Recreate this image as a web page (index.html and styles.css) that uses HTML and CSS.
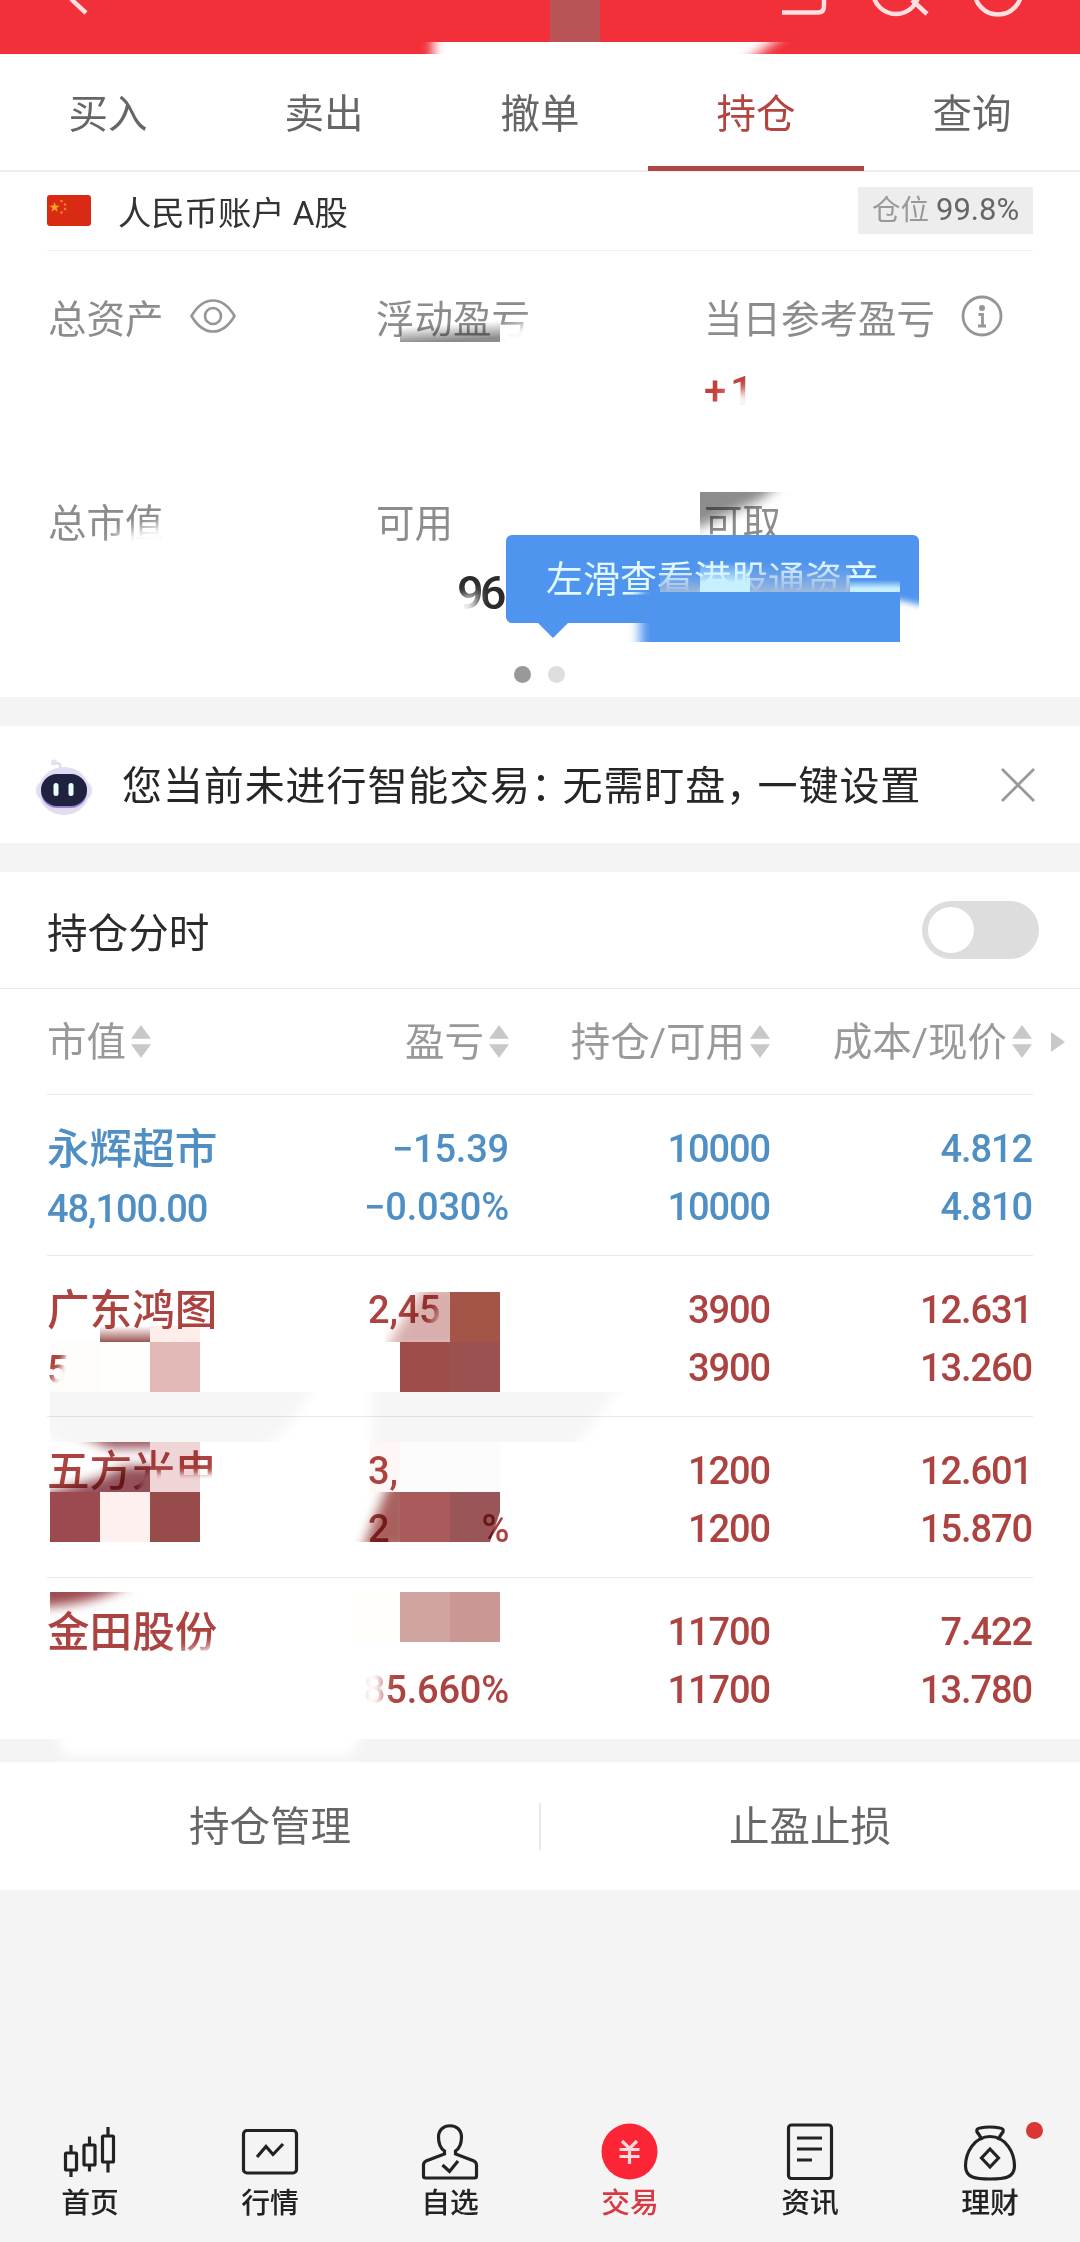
FILE: index.html
```html
<!DOCTYPE html>
<html lang="zh-CN">
<head>
  <meta charset="UTF-8" />
  <title>持仓</title>
  <meta name="viewport" content="width=device-width, initial-scale=1.0" />
  <link rel="stylesheet" href="styles.css">
</head>
<body>
  <div class="app">
    <header class="topbar">
      <svg width="1080" height="54" viewBox="0 0 1080 54" fill="none" stroke="#ffdfe0" stroke-width="4.5">
        <path d="M68 -8 L72 0 L86 13" />
        <path d="M782 12.500 H818 Q824 12.500 824 6 V-4" />
        <circle cx="896" cy="-9" r="23" />
        <path d="M912 0 L927 14" />
        <circle cx="998" cy="-9" r="23.500" />
      </svg>
    </header>

    <nav class="tabs">
      <a class="tab">买入</a>
      <a class="tab">卖出</a>
      <a class="tab">撤单</a>
      <a class="tab active">持仓</a>
      <a class="tab">查询</a>
    </nav>

    <section class="account">
      <svg class="flag" width="44" height="31" viewBox="0 0 44 31">
        <rect width="44" height="31" rx="3" fill="#d92b13" />
        <path d="M7.500 7 l1.300 3.600 3.800.1 -3 2.400 1.100 3.700 -3.200-2.200 -3.100 2.200 1.100-3.700 -3-2.400 3.800-.1z" fill="#f5a623" />
        <g fill="#ee8a20">
          <circle cx="14.500" cy="6" r="1.300" />
          <circle cx="18" cy="9.500" r="1.300" />
          <circle cx="18" cy="14" r="1.300" />
          <circle cx="14.500" cy="17.500" r="1.300" />
        </g>
      </svg>
      <span class="account-name">人民币账户 A股</span>
      <span class="ratio">仓位 <b>99.8%</b></span>
    </section>

    <section class="assets">
      <div class="asset">
        <div class="asset-label">总资产
          <svg width="46" height="34" viewBox="0 0 46 34" fill="none" stroke="#969696" stroke-width="2.600">
            <path d="M1.500 17 C8 6 15 1.500 23 1.500 S38 6 44.500 17 C38 28 31 32.500 23 32.500 S8 28 1.500 17z" />
            <circle cx="23" cy="17" r="8" />
          </svg>
        </div>
      </div>
      <div class="asset">
        <div class="asset-label">浮动盈亏</div>
      </div>
      <div class="asset">
        <div class="asset-label">当日参考盈亏
          <svg width="42" height="42" viewBox="0 0 42 42" fill="none" stroke="#969696" stroke-width="2.800">
            <circle cx="21" cy="21" r="19" />
            <circle cx="21" cy="13" r="3" fill="#969696" stroke="none" />
            <path d="M17.500 19.500 H21.500 V31 M17 31 H25" />
          </svg>
        </div>
        <div class="asset-value up">+1</div>
      </div>
      <div class="asset">
        <div class="asset-label">总市值</div>
      </div>
      <div class="asset">
        <div class="asset-label">可用</div>
        <div class="asset-value cash">96</div>
      </div>
      <div class="asset">
        <div class="asset-label">可取</div>
      </div>
      <div class="pager"><i class="dot on"></i><i class="dot"></i></div>
      <div class="tooltip">左滑查看港股通资产</div>
    </section>

    <section class="notice">
      <svg class="robot" width="56" height="58" viewBox="0 0 56 58">
        <path d="M24 12 Q26 4 19 5" fill="none" stroke="#dfdcec" stroke-width="2.500" />
        <circle cx="18" cy="4.500" r="3" fill="#e4e2ee" />
        <rect x="0" y="24" width="56" height="17" rx="7" fill="#e3e0f2" />
        <ellipse cx="28" cy="33" rx="25.500" ry="24" fill="#e2dcf3" />
        <rect x="5" y="17" width="46" height="33" rx="16" fill="#9a83cf" />
        <rect x="5" y="16" width="46" height="32" rx="16" fill="#1f2340" />
        <rect x="17.500" y="25" width="5" height="13" rx="2.500" fill="#e9ffff" />
        <rect x="32.500" y="25" width="5" height="13" rx="2.500" fill="#e9ffff" />
      </svg>
      <p>您当前未进行智能交易<span class="pt">：</span>无需盯盘<span class="pt">，</span>一键设置</p>
      <svg class="close" width="34" height="34" viewBox="0 0 34 34" stroke="#999" stroke-width="2.800">
        <path d="M1 1 L33 33 M33 1 L1 33" />
      </svg>
    </section>

    <section class="holdings">
      <div class="switch-row">
        <span>持仓分时</span>
        <span class="switch"></span>
      </div>

      <div class="row head">
        <div>市值<i class="sort"></i></div>
        <div>盈亏<i class="sort"></i></div>
        <div>持仓/可用<i class="sort"></i></div>
        <div>成本/现价<i class="sort"></i></div>
        <i class="more"></i>
      </div>

      <div class="row down">
        <div><b class="name">永辉超市</b><br>48,100.00</div>
        <div class="profit">−15.39<br>−0.030%</div>
        <div>10000<br>10000</div>
        <div>4.812<br>4.810</div>
      </div>
      <div class="row up">
        <div><b class="name">广东鸿图</b><br>5</div>
        <div class="profit cut">2,45<br>&nbsp;</div>
        <div>3900<br>3900</div>
        <div>12.631<br>13.260</div>
      </div>
      <div class="row up">
        <div><b class="name">五方光电</b></div>
        <div class="profit cut">3,<br>2<span class="pct">%</span></div>
        <div>1200<br>1200</div>
        <div>12.601<br>15.870</div>
      </div>
      <div class="row up">
        <div><b class="name">金田股份</b></div>
        <div class="profit">&nbsp;<br>85.660%</div>
        <div>11700<br>11700</div>
        <div>7.422<br>13.780</div>
      </div>
    </section>

    <section class="actions">
      <a>持仓管理</a>
      <a>止盈止损</a>
    </section>

    <nav class="bottom-nav">
      <a>
        <svg width="60" height="60" viewBox="0 0 60 60">
          <rect x="5.500" y="34" width="11" height="17" rx="1" /><path d="M11 26 V34 M11 51 V58" />
          <rect x="24" y="26" width="11" height="20" rx="1" /><path d="M29.500 17.500 V26 M29.500 46 V52.500" />
          <rect x="42.500" y="17" width="11" height="26" rx="1" /><path d="M48 8 V17 M48 43 V53.500" />
        </svg>
        首页
      </a>
      <a>
        <svg width="60" height="60" viewBox="0 0 60 60">
          <rect x="3.500" y="11.500" width="53" height="42.500" rx="3.500" />
          <path d="M17 38 L26 27.500 L33 35.500 L43 25" />
        </svg>
        行情
      </a>
      <a>
        <svg width="60" height="60" viewBox="0 0 60 60">
          <path d="M24.500 32 V35 L6 42 Q3.500 43.500 3.500 46 V57 Q3.500 59 5.500 59 H54.500 Q56.500 59 56.500 57 V46 Q56.500 43.500 54 42 L35.500 35 V32 Q41.500 28 41.500 18 C41.500 3 18.500 3 18.500 18 Q18.500 28 24.500 32z" />
          <path d="M22.500 46 L29.500 52.500 L38 42" />
        </svg>
        自选
      </a>
      <a class="current">
        <svg width="60" height="60" viewBox="0 0 60 60">
          <circle cx="29.500" cy="32.500" r="28" fill="#fb2536" stroke="none" />
          <path d="M22 22 L29.500 29.500 L37 22 M19.500 30.500 H39.500 M19.500 37.500 H39.500 M29.500 29 V45" stroke="#ffd9dc" />
        </svg>
        交易
      </a>
      <a>
        <svg width="60" height="60" viewBox="0 0 60 60">
          <rect x="8.500" y="6" width="43" height="53.500" rx="3" />
          <path d="M17 19 H42 M17 30 H42 M17 41 H32" />
        </svg>
        资讯
      </a>
      <a>
        <svg width="60" height="60" viewBox="0 0 60 60">
          <path d="M22 21 Q19 15 17 13 Q16 9.500 20 9 Q30 7 40 9 Q44 9.500 43 13 Q41 15 38 21" />
          <path d="M30 17.500 C14 17.500 5.500 34 5.500 47 C5.500 59 16 60 30 60 S54.500 59 54.500 47 C54.500 34 46 17.500 30 17.500z" />
          <path d="M30 30 L38.500 39 L30 48 L21.500 39z" />
        </svg>
        理财
        <i class="badge"></i>
      </a>
    </nav>

    <!-- privacy masking: fades that hide the digits -->
    <svg class="mask" width="1080" height="2242" viewBox="0 0 1080 2242">
      <defs>
        <filter id="soft" x="-30%" y="-30%" width="160%" height="160%"><feGaussianBlur stdDeviation="6" /></filter>
        <filter id="fine" x="-30%" y="-30%" width="160%" height="160%"><feGaussianBlur stdDeviation="3" /></filter>
        <clipPath id="bar"><rect x="400" y="42" width="400" height="14" /></clipPath>
        <clipPath id="strip"><rect x="0" y="1739" width="500" height="23" /></clipPath>
        <clipPath id="tip"><rect x="600" y="592" width="300" height="50" /></clipPath>
        <clipPath id="tipend"><rect x="900" y="580" width="40" height="70" /></clipPath>
        <linearGradient id="tipfade" x1="0" y1="0" x2="0" y2="1">
          <stop offset="0" stop-color="#c7f0ff" stop-opacity="0" />
          <stop offset="0.7" stop-color="#c7f0ff" />
        </linearGradient>
        <linearGradient id="tipgray" x1="0" y1="0" x2="0" y2="1">
          <stop offset="0" stop-color="#7faae6" stop-opacity="0" />
          <stop offset="1" stop-color="#9db9dc" />
        </linearGradient>
      </defs>
      <rect x="550" y="0" width="50" height="42" fill="#b85456" />
      <g clip-path="url(#bar)"><path d="M433 30 H790 L735 70 H433z" fill="#fff" filter="url(#soft)" /></g>
      <g fill="#fff" filter="url(#soft)">
        <path d="M500 330 L545 318 V360 H500z" />
        <path d="M108 548 L115 535 L170 522 V560z" />
        <path d="M722 404 V396 L755 388 V420z" />
        <path d="M450 602 L480 592 L470 627 H445z" />
        <path d="M60 1372 H100 V1400 H40z" />
        <path d="M443 1300 L475 1285 V1340 H425z" />
        <path d="M170 1655 L225 1644 V1670 H150z" />
        <path d="M360 1660 H383 V1720 H360z" />
        <path d="M405 1492 H450 V1542 H400z" />
      </g>
      <path d="M140 1473 H225 V1505 H140z" fill="#fff" filter="url(#fine)" />
      <path d="M66 1350 H230 V1390 H55z" fill="#fff" filter="url(#fine)" />
      <rect x="660" y="570" width="40" height="22" fill="url(#tipgray)" />
      <rect x="700" y="562" width="50" height="30" fill="url(#tipfade)" />
      <rect x="750" y="562" width="100" height="30" fill="url(#tipgray)" />
      <rect x="850" y="580" width="50" height="12" fill="url(#tipfade)" />
      <g clip-path="url(#tipend)"><path d="M870 594 L935 608 V670 H870z" fill="#fff" filter="url(#fine)" /></g>
      <g clip-path="url(#tip)"><path d="M640 580 H920 V660 H640z" fill="#4f94ee" filter="url(#soft)" /><rect x="650" y="592" width="250" height="50" fill="#4f94ee" /></g>
      <g clip-path="url(#strip)"><path d="M50 1720 H370 L350 1756 H65z" fill="#fff" filter="url(#soft)" /></g>
    </svg>

    <!-- privacy masking: mosaic blocks, text stays visible through them -->
    <svg class="mask mosaic" width="1080" height="2242" viewBox="0 0 1080 2242">
      <defs>
        <linearGradient id="g1" x1="0" y1="0" x2=".25" y2="1">
          <stop offset=".35" stop-color="#8c8c8c" stop-opacity="0" />
          <stop offset="1" stop-color="#8c8c8c" />
        </linearGradient>
        <linearGradient id="r1" x1="0" y1="0" x2="0" y2="1">
          <stop offset="0" stop-color="#9c5552" stop-opacity="0" />
          <stop offset="1" stop-color="#9c5552" />
        </linearGradient>
        <clipPath id="c1"><rect x="700" y="492" width="100" height="43" /></clipPath>
        <clipPath id="c2"><rect x="50" y="1392" width="600" height="50" /></clipPath>
        <clipPath id="c3"><rect x="50" y="1442" width="100" height="50" /></clipPath>
        <clipPath id="c4"><rect x="350" y="1492" width="150" height="50" /></clipPath>
        <clipPath id="c5"><rect x="50" y="1592" width="100" height="50" /></clipPath>
        <clipPath id="c6"><rect x="385" y="1292" width="65" height="50" /></clipPath>
      </defs>
      <rect x="400" y="318" width="100" height="24" fill="url(#g1)" />
      <g clip-path="url(#c1)"><path d="M670 460 H810 L760 500 L700 527 H670z" fill="#8c8c8c" filter="url(#soft)" /></g>
      <rect x="100" y="1326" width="50" height="16" fill="url(#r1)" />
      <rect x="150" y="1326" width="50" height="16" fill="#fdeeea" />
      <rect x="50" y="1342" width="50" height="50" fill="#fffdfb" />
      <rect x="100" y="1342" width="50" height="50" fill="#fefffa" />
      <rect x="150" y="1342" width="50" height="50" fill="#e2b9b6" />
      <g clip-path="url(#c6)"><path d="M425 1285 H460 V1350 H385z" fill="#d8afac" filter="url(#soft)" /></g>
      <rect x="450" y="1292" width="50" height="50" fill="#a55548" />
      <rect x="400" y="1342" width="50" height="50" fill="#9f4d4b" />
      <rect x="450" y="1342" width="50" height="50" fill="#9a514f" />
      <g clip-path="url(#c2)" fill="#f6f6f6">
        <path d="M40 1380 H315 Q300 1425 255 1455 H75 L40 1430z" filter="url(#soft)" />
        <path d="M372 1380 H625 L570 1455 H372z" filter="url(#soft)" />
      </g>
      <g clip-path="url(#c3)"><path d="M70 1430 H160 V1448 H110z M40 1495 L100 1478 L125 1466 H165 V1505 H40z" fill="#94505a" filter="url(#soft)" /></g>
      <rect x="150" y="1442" width="50" height="50" fill="#efd5d6" />
      <rect x="50" y="1492" width="50" height="50" fill="#9c4950" />
      <rect x="100" y="1492" width="50" height="50" fill="#fff0f0" />
      <rect x="150" y="1492" width="50" height="50" fill="#974b4b" />
      <rect x="370" y="1442" width="30" height="50" fill="#fff6f6" />
      <rect x="400" y="1442" width="100" height="50" fill="#fdfcfd" />
      <g clip-path="url(#c4)">
        <path d="M390 1480 H410 V1550 H362z" fill="#a8605f" filter="url(#soft)" />
        <rect x="400" y="1492" width="50" height="50" fill="#ab5a5c" />
        <path d="M450 1492 H500 V1512 L490 1542 H450z" fill="#9a5558" />
      </g>
      <g clip-path="url(#c5)"><path d="M40 1580 H135 Q100 1604 40 1607z" fill="#9c4950" filter="url(#soft)" /></g>
      <rect x="352" y="1592" width="48" height="50" fill="#fffefa" />
      <rect x="400" y="1592" width="50" height="50" fill="#d1a3a1" />
      <rect x="450" y="1592" width="50" height="50" fill="#ca9794" />
    </svg>
  </div>
</body>
</html>
```
FILE: styles.css
```css
* {
  box-sizing: border-box;
}

body {
  margin: 0;
  background-color: #f4f4f4;
  color: #2b2b2b;
  font-family: Roboto, 'Noto Sans CJK SC', sans-serif;
}

p {
  margin: 0;
}

i,
b {
  font-style: normal;
  font-weight: inherit;
}

.app {
  position: relative;
  display: flex;
  flex-direction: column;
  width: 1080px;
  height: 2242px;
  overflow: hidden;
}

.topbar {
  height: 54px;
  background-color: #f13039;
}

.tabs {
  display: flex;
  height: 118px;
  background-color: #fff;
  border-bottom: 2px solid #ededed;
}

.tab {
  flex: 1;
  height: 117px;
  line-height: 122px;
  text-align: center;
  font-size: 39.5px;
  color: #666;
}

.tab.active {
  color: #b34440;
  border-bottom: 5px solid #ad4744;
}

.account {
  display: flex;
  align-items: center;
  height: 78px;
  padding: 0 47px 2px;
  background-color: #fff;
}

.account-name {
  margin-left: 27px;
  font-size: 33.3px;
  color: #333;
}

.ratio {
  margin-left: auto;
  width: 175px;
  height: 47px;
  line-height: 46px;
  text-align: center;
  font-size: 28.5px;
  color: #999;
  background-color: #ededed;
}

.ratio b {
  color: #666;
  font-size: 31px;
}

.assets {
  position: relative;
  display: grid;
  grid-template-columns: 328px 328px 1fr;
  grid-template-rows: 204px 204px;
  height: 447px;
  padding: 36px 0 0 48px;
  background: #fff linear-gradient(#efefef, #efefef) 47px 0 / 986px 1px no-repeat;
}

.asset-label {
  display: flex;
  align-items: center;
  gap: 26px;
  height: 60px;
  font-size: 38.5px;
  color: #8c8c8c;
  white-space: nowrap;
}

.asset-value {
  font-size: 46px;
  font-weight: 500;
  line-height: 60px;
}

.asset-value.up {
  margin-top: 16px;
  font-size: 40px;
  letter-spacing: 4px;
  color: #c0403c;
}

.asset-value.cash {
  margin: 13px 0 0 81px;
  font-size: 47px;
  letter-spacing: -4px;
  color: #2b2b2b;
}

.pager {
  position: absolute;
  left: 514px;
  bottom: 14px;
  display: flex;
  gap: 17px;
}

.dot {
  width: 17px;
  height: 17px;
  border-radius: 50%;
  background-color: #dedede;
}

.dot.on {
  background-color: #999;
}

.tooltip {
  position: absolute;
  left: 506px;
  top: 285px;
  width: 413px;
  height: 88px;
  padding-left: 40px;
  line-height: 91px;
  font-size: 37px;
  color: #e2faff;
  background-color: #4f94ee;
  border-radius: 6px;
  white-space: nowrap;
}

.tooltip::after {
  content: "";
  position: absolute;
  left: 31px;
  top: 87px;
  border: 16px solid transparent;
  border-top-color: #4f94ee;
  border-bottom: 0;
}

.notice {
  display: flex;
  align-items: center;
  height: 117px;
  margin: 29px 0;
  padding: 0 45px 0 36px;
  background-color: #fff;
}

.robot {
  margin-top: 4px;
}

.notice p {
  margin: -3px 0 0 30px;
  font-size: 40px;
  letter-spacing: 0.9px;
  color: #262626;
}

.pt {
  letter-spacing: -8.5px;
}

.close {
  margin-left: auto;
}

.holdings {
  height: 867px;
  background-color: #fff;
}

.switch-row {
  display: flex;
  align-items: center;
  justify-content: space-between;
  height: 117px;
  padding: 0 41px 0 47px;
  font-size: 40.6px;
  color: #2b2b2b;
  border-bottom: 1px solid #e9e9e9;
}

.switch {
  width: 117px;
  height: 58px;
  padding: 6px;
  border-radius: 29px;
  background-color: #ddd;
}

.switch::before {
  content: "";
  display: block;
  width: 46px;
  height: 46px;
  border-radius: 50%;
  background-color: #fff;
}

.row {
  display: grid;
  grid-template-columns: 199px 264px 261px 262px;
  height: 161px;
  margin: 0 47px;
  padding-top: 25px;
  line-height: 58px;
  font-size: 38px;
  font-weight: 500;
  letter-spacing: -1.1px;
  text-align: right;
  white-space: nowrap;
  border-bottom: 1px solid #e9e9e9;
}

.row:last-child {
  border-bottom: none;
}

.row > div:first-child {
  text-align: left;
}

.row > div:not(:first-child) {
  padding-right: 1px;
}

.row .profit {
  letter-spacing: -0.2px;
}

.name {
  font-size: 42.6px;
  letter-spacing: 0;
}

.down {
  color: #4f8fc4;
}

.up {
  color: #ad4340;
}

.row .cut {
  padding-left: 122px;
  text-align: left;
}

.pct {
  margin-left: 92px;
}

.row.head {
  position: relative;
  height: 106px;
  font-size: 39.5px;
  font-weight: 400;
  letter-spacing: 0;
  color: #999;
}

.sort {
  display: inline-block;
  width: 20px;
  height: 33px;
  margin-left: 5px;
  vertical-align: -2px;
  background-color: #c8c8c8;
  clip-path: polygon(50% 0, 100% 42%, 0 42%, 0 58%, 100% 58%, 50% 100%, 0 58%, 0 42%);
}

.more {
  position: absolute;
  right: -32px;
  top: 43px;
  border: 10px solid transparent;
  border-left: 14px solid #c8c8c8;
  border-right: 0;
}

.actions {
  display: flex;
  height: 128px;
  margin-top: 23px;
  background: #fff linear-gradient(#e8e8e8, #e8e8e8) center / 2px 47px no-repeat;
}

.actions a {
  flex: 1;
  line-height: 131px;
  text-align: center;
  font-size: 40.5px;
  color: #666;
}

.bottom-nav {
  display: flex;
  height: 123px;
  margin-top: auto;
}

.bottom-nav a {
  position: relative;
  flex: 1;
  display: flex;
  flex-direction: column;
  align-items: center;
  line-height: 49px;
  font-size: 28.8px;
  font-weight: 500;
  color: #222;
}

.bottom-nav svg {
  overflow: visible;
  fill: none;
  stroke: #222;
  stroke-width: 3.2;
}

.bottom-nav .current {
  color: #d83a44;
}

.badge {
  position: absolute;
  left: 126px;
  top: 3px;
  width: 17px;
  height: 17px;
  border-radius: 50%;
  background-color: #dc3535;
}

.mask {
  position: absolute;
  left: 0;
  top: 0;
  pointer-events: none;
}

.mosaic {
  mix-blend-mode: multiply;
}
```
